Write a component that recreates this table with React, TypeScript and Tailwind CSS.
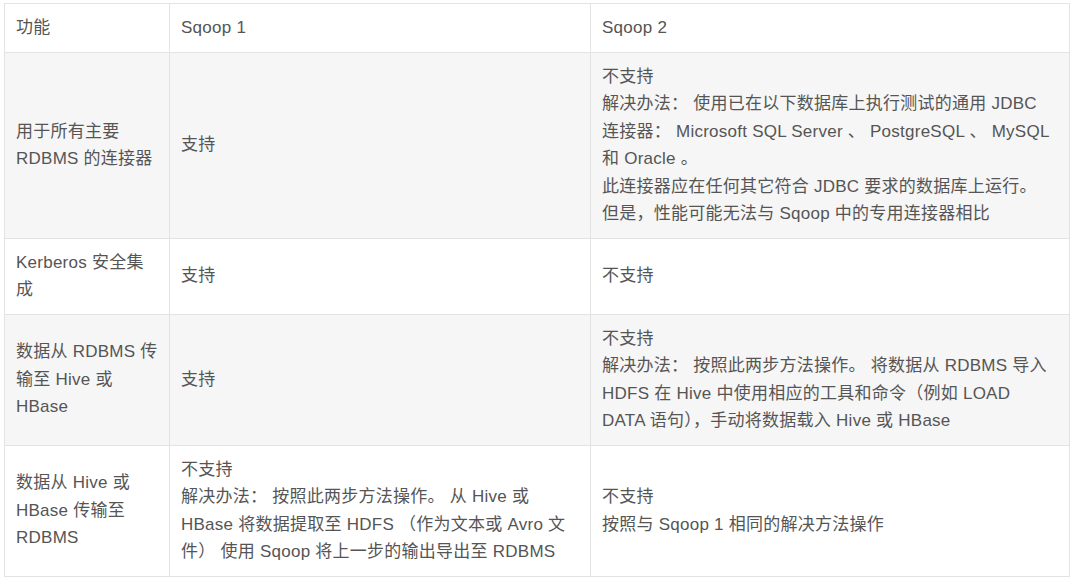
const rows: { feature: string[]; s1: string[]; s2: string[]; bg: string }[] = [
  {
    feature: ["用于所有主要", "RDBMS 的连接器"],
    s1: ["支持"],
    s2: [
      "不支持",
      "解决办法： 使用已在以下数据库上执行测试的通用 JDBC",
      "连接器： Microsoft SQL Server 、 PostgreSQL 、 MySQL",
      "和 Oracle 。",
      "此连接器应在任何其它符合 JDBC 要求的数据库上运行。",
      "但是，性能可能无法与 Sqoop 中的专用连接器相比",
    ],
    bg: "bg-[#f6f6f6]",
  },
  {
    feature: ["Kerberos 安全集", "成"],
    s1: ["支持"],
    s2: ["不支持"],
    bg: "bg-white",
  },
  {
    feature: ["数据从 RDBMS 传", "输至 Hive 或", "HBase"],
    s1: ["支持"],
    s2: [
      "不支持",
      "解决办法： 按照此两步方法操作。 将数据从 RDBMS 导入",
      "HDFS 在 Hive 中使用相应的工具和命令（例如 LOAD",
      "DATA 语句），手动将数据载入 Hive 或 HBase",
    ],
    bg: "bg-[#f6f6f6]",
  },
  {
    feature: ["数据从 Hive 或", "HBase 传输至", "RDBMS"],
    s1: [
      "不支持",
      "解决办法： 按照此两步方法操作。 从 Hive 或",
      "HBase 将数据提取至 HDFS （作为文本或 Avro 文",
      "件） 使用 Sqoop 将上一步的输出导出至 RDBMS",
    ],
    s2: ["不支持", "按照与 Sqoop 1 相同的解决方法操作"],
    bg: "bg-white",
  },
];

function Lines({ lines }: { lines: string[] }) {
  return (
    <>
      {lines.map((line, i) => (
        <div key={i} className="whitespace-pre">
          {line}
        </div>
      ))}
    </>
  );
}

export default function App() {
  const cell = "border border-[#e3e3e3] px-[11px] py-[10px] align-middle";

  return (
    <main
      className="min-h-screen bg-white pl-[4px] pt-[3px] text-[17px] leading-[27.5px] tracking-[0.25px] text-[#555]"
      style={{ fontFamily: '"Liberation Sans", "Noto Sans CJK SC", sans-serif' }}
    >
      <table className="w-[1065px] table-fixed border-collapse">
        <colgroup>
          <col className="w-[165px]" />
          <col className="w-[421px]" />
          <col className="w-[479px]" />
        </colgroup>
        <thead>
          <tr className="bg-white">
            <th className={`${cell} text-left font-normal`}>功能</th>
            <th className={`${cell} text-left font-normal`}>Sqoop 1</th>
            <th className={`${cell} text-left font-normal`}>Sqoop 2</th>
          </tr>
        </thead>
        <tbody>
          {rows.map((row, i) => (
            <tr key={i} className={row.bg}>
              <td className={cell}>
                <Lines lines={row.feature} />
              </td>
              <td className={cell}>
                <Lines lines={row.s1} />
              </td>
              <td className={cell}>
                <Lines lines={row.s2} />
              </td>
            </tr>
          ))}
        </tbody>
      </table>
    </main>
  );
}
